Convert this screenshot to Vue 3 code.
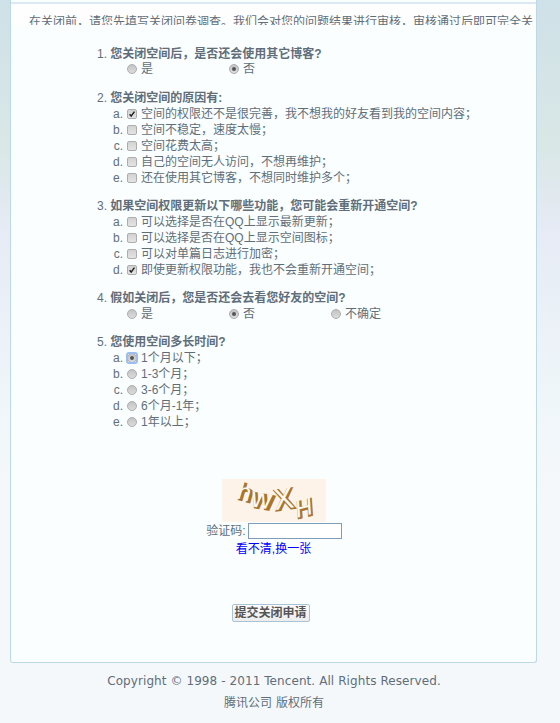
<script setup>
const q1 = ['是', '否']
const q2 = [
  ['a.', '空间的权限还不是很完善，我不想我的好友看到我的空间内容；', true],
  ['b.', '空间不稳定，速度太慢；', false],
  ['c.', '空间花费太高；', false],
  ['d.', '自己的空间无人访问，不想再维护；', false],
  ['e.', '还在使用其它博客，不想同时维护多个；', false]
]
const q3 = [
  ['a.', '可以选择是否在QQ上显示最新更新；', false],
  ['b.', '可以选择是否在QQ上显示空间图标；', false],
  ['c.', '可以对单篇日志进行加密；', false],
  ['d.', '即使更新权限功能，我也不会重新开通空间；', true]
]
const q4 = ['是', '否', '不确定']
const q5 = [
  ['a.', '1个月以下；', true],
  ['b.', '1-3个月；', false],
  ['c.', '3-6个月；', false],
  ['d.', '6个月-1年；', false],
  ['e.', '1年以上；', false]
]
// captcha letters: char, font size, transform
const captcha = [
  ['h', 24, 'translate(15 20) rotate(16)'],
  ['w', 28, 'translate(29 28) rotate(10)'],
  ['X', 30, 'translate(54 32) rotate(-8)'],
  ['H', 24, 'translate(75 40) rotate(-14) skewX(-10)']
]
</script>

<template>
  <div class="page">
    <div class="panel">
      <div class="intro-clip">
        <p class="intro">在关闭前，请您先填写关闭问卷调查。我们会对您的问题结果进行审核，审核通过后即可完全关</p>
      </div>

      <div class="survey">
        <section class="question">
          <h4><span class="num">1.</span> 您关闭空间后，是否还会使用其它博客?</h4>
          <div class="inline-opts">
            <label v-for="(o, i) in q1" :key="o" class="inline-opt">
              <span class="radio" :class="{ on: i === 1 }"></span>{{ o }}
            </label>
          </div>
        </section>

        <section class="question">
          <h4><span class="num">2.</span> 您关闭空间的原因有:</h4>
          <div v-for="r in q2" :key="r[0]" class="row">
            <span class="letter">{{ r[0] }}</span>
            <span class="check" :class="{ on: r[2] }"><svg v-if="r[2]" viewBox="0 0 10 10"><path d="M2 5.2 4 7.6 8 2" fill="none" stroke="#222" stroke-width="1.9" /></svg></span>
            <span>{{ r[1] }}</span>
          </div>
        </section>

        <section class="question">
          <h4><span class="num">3.</span> 如果空间权限更新以下哪些功能，您可能会重新开通空间?</h4>
          <div v-for="r in q3" :key="r[0]" class="row">
            <span class="letter">{{ r[0] }}</span>
            <span class="check" :class="{ on: r[2] }"><svg v-if="r[2]" viewBox="0 0 10 10"><path d="M2 5.2 4 7.6 8 2" fill="none" stroke="#222" stroke-width="1.9" /></svg></span>
            <span>{{ r[1] }}</span>
          </div>
        </section>

        <section class="question">
          <h4><span class="num">4.</span> 假如关闭后，您是否还会去看您好友的空间?</h4>
          <div class="inline-opts">
            <label v-for="(o, i) in q4" :key="o" class="inline-opt">
              <span class="radio" :class="{ on: i === 1 }"></span>{{ o }}
            </label>
          </div>
        </section>

        <section class="question">
          <h4><span class="num">5.</span> 您使用空间多长时间?</h4>
          <div v-for="r in q5" :key="r[0]" class="row">
            <span class="letter">{{ r[0] }}</span>
            <span class="radio" :class="{ on: r[2], focus: r[2] }"></span>
            <span>{{ r[1] }}</span>
          </div>
        </section>
      </div>

      <div class="verify">
        <svg class="captcha" viewBox="0 0 104 43" width="104" height="43">
          <rect width="104" height="43" fill="#fdf3e8" />
          <g font-family="Liberation Sans, sans-serif" font-weight="700">
            <text v-for="c in captcha" :key="c[0]" :transform="c[2]" :font-size="c[1]" fill="#a8742c" stroke="#a8742c" stroke-width="1.4">{{ c[0] }}</text>
            <g transform="translate(-1.1 -1.1)">
              <text v-for="c in captcha" :key="c[0]" :transform="c[2]" :font-size="c[1]" font-weight="400" fill="#fff9f0">{{ c[0] }}</text>
            </g>
          </g>
        </svg>
        <div class="code-row">
          <span>验证码:</span>
          <input class="code-input" type="text" />
        </div>
        <a class="refresh" href="#">看不清,换一张</a>
        <button class="submit" type="button">提交关闭申请</button>
      </div>
    </div>

    <footer class="foot">
      <p class="copy">Copyright © 1998 - 2011 Tencent. All Rights Reserved.</p>
      <p>腾讯公司 版权所有</p>
    </footer>
  </div>
</template>

<style>
html, body {
  margin: 0;
  padding: 0;
}
</style>

<style scoped>
.page {
  width: 560px;
  height: 723px;
  overflow: hidden;
  box-sizing: border-box;
  padding: 0 23px 0 10px;
  background: linear-gradient(180deg, #cfe1e8 0%, #d9e7e6 20%, #e6ebf5 32%, #eff6f9 55%, #f5f8fb 70%, #f5f8fb 100%);
  font-family: "Liberation Sans", "Noto Sans CJK SC", sans-serif;
  font-size: 12px;
  line-height: 16px;
  color: #5f6e7a;
}

.panel {
  width: 527px;
  height: 663px;
  box-sizing: border-box;
  padding-top: 2px;
  background: #fafeff;
  border: 1px solid #bcd9e8;
  border-top: none;
  border-radius: 0 0 3px 3px;
}

.intro-clip {
  height: 21px;
  overflow: hidden;
  padding-left: 18px;
  background: #fefefe;
  border-top: 2px solid #dde9f2;
}

.intro {
  margin: 10px 0 0;
  line-height: 16px;
  white-space: nowrap;
}

.survey {
  padding-left: 86px;
  padding-top: 21px;
}

.question {
  margin-bottom: 12px;
}

.question:first-child .inline-opts {
  margin-top: -1px;
  padding-bottom: 1px;
}

h4 {
  margin: 0;
  font-size: 12px;
  line-height: 16px;
  font-weight: 700;
}

.num {
  font-weight: 400;
}

.inline-opts {
  display: flex;
  padding-left: 30px;
}

.inline-opt {
  display: flex;
  align-items: center;
  gap: 4px;
  width: 102px;
}

.row {
  display: flex;
  align-items: center;
  height: 16px;
}

.letter {
  width: 26px;
  text-align: right;
  margin-right: 4px;
}

.radio, .check {
  flex: none;
  width: 8px;
  height: 8px;
  border: 1px solid #adadad;
  background: linear-gradient(#d2d2d2, #e4e4e4);
  margin-right: 4px;
}

.inline-opt .radio {
  margin-right: 0;
}

.radio {
  border-radius: 50%;
  position: relative;
  background: linear-gradient(#c4c4c4, #dcdcdc);
}

.radio.on::after {
  content: "";
  position: absolute;
  left: 2px;
  top: 2px;
  width: 4px;
  height: 4px;
  border-radius: 50%;
  background: #555;
}

.radio.focus::before {
  content: "";
  position: absolute;
  left: -2px;
  top: -2px;
  width: 8px;
  height: 8px;
  border: 2px solid #9cbdf2;
  border-radius: 3px;
}

.check {
  border-radius: 2px;
}

.check svg {
  display: block;
  width: 8px;
  height: 8px;
}

.verify {
  display: flex;
  flex-direction: column;
  align-items: center;
  margin-top: 49px;
}

.captcha {
  display: block;
}

.code-row {
  display: flex;
  align-items: center;
  gap: 2px;
  height: 18px;
  margin-left: 1px;
}

.code-input {
  width: 94px;
  height: 16px;
  box-sizing: border-box;
  padding: 0;
  margin: 0;
  background: #fff;
  border: 1px solid #7f9db9;
}

.refresh {
  color: #0000ff;
  text-decoration: none;
  line-height: 14px;
  margin-top: 2px;
}

.submit {
  margin-top: 48px;
  margin-right: 6px;
  width: 78px;
  height: 18px;
  padding: 0;
  font: 700 12px/15px "Liberation Sans", "Noto Sans CJK SC", sans-serif;
  color: #555;
  background: linear-gradient(#fdfdfd, #ececec);
  border: 1px solid #a9c3d6;
  border-radius: 2px;
  white-space: nowrap;
}

.foot {
  text-align: center;
  padding-left: 1px;
  padding-top: 7px;
}

.foot p {
  margin: 0;
  font-family: "DejaVu Sans", "Noto Sans CJK SC", sans-serif;
  font-size: 12px;
  line-height: 22px;
}

.foot .copy {
  letter-spacing: 0.08px;
}
</style>
